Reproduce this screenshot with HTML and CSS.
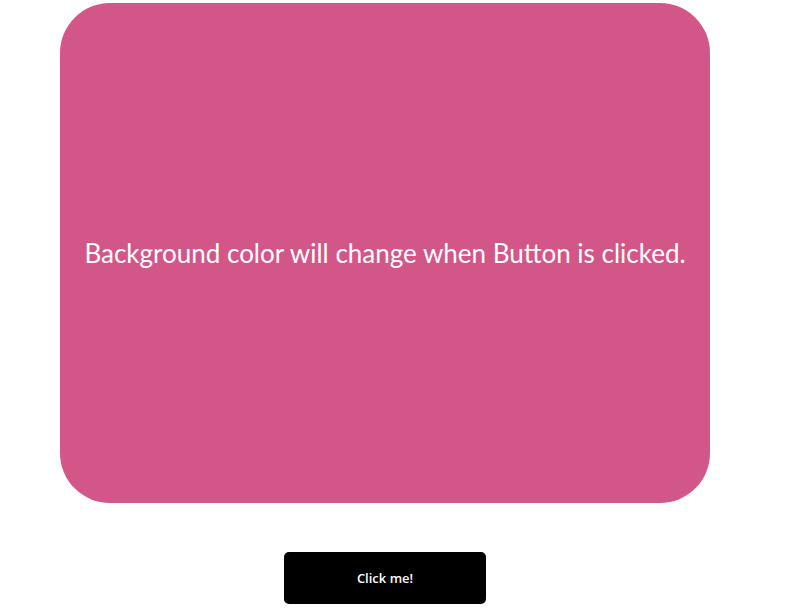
FILE: index.html
```html
<!DOCTYPE html>
<html>
<head>
<meta charset="utf-8">
<link rel="stylesheet" href="styles.css">
</head>
<body>
<div class="page">
  <div class="card">
    <p class="message">Background color will change when Button is clicked.</p>
  </div>
  <button class="btn">Click me!</button>
</div>
</body>
</html>
```
FILE: styles.css
```css
html, body {
  margin: 0;
  padding: 0;
  background: #ffffff;
}
.page {
  width: 650px;
  margin: 3px 0 0 60px;
  display: flex;
  flex-direction: column;
  align-items: center;
}
.card {
  width: 650px;
  height: 500px;
  background: #d35689;
  border-radius: 50px;
  display: flex;
  align-items: center;
  justify-content: center;
}
.message {
  margin: 0;
  color: #ffffff;
  font-family: "Lato", "DejaVu Sans", sans-serif;
  font-size: 26px;
}
.btn {
  margin-top: 49px;
  width: 202px;
  height: 52px;
  background: #000000;
  color: #ffffff;
  border: none;
  border-radius: 5px;
  font-family: "Open Sans", sans-serif;
  font-size: 13px;
  font-weight: 600;
}
```
